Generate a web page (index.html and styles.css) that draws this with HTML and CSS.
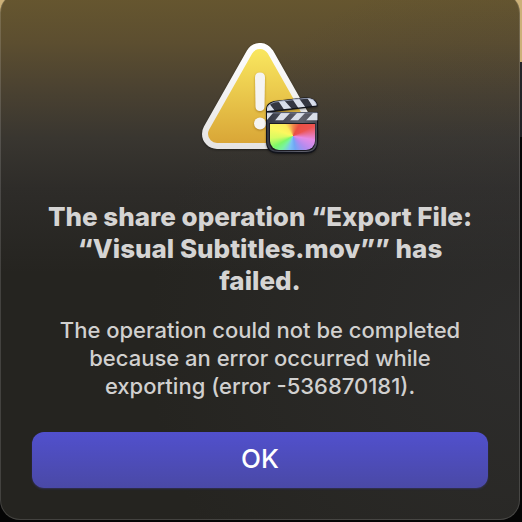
FILE: index.html
```html
<!DOCTYPE html>
<html lang="en">
<head>
    <meta charset="UTF-8">
    <title>Share failed</title>
    <link rel="stylesheet" href="styles.css">
</head>
<body>
<div class="dialog" role="alertdialog" aria-labelledby="title" aria-describedby="message">
    <svg class="icon" viewBox="0 0 128 128" aria-hidden="true">
        <defs>
            <linearGradient id="edge" gradientUnits="userSpaceOnUse" x1="0" y1="11" x2="0" y2="117">
                <stop offset="0" stop-color="#ffffff"/>
                <stop offset="1" stop-color="#e4e3e3"/>
            </linearGradient>
            <linearGradient id="yellow" gradientUnits="userSpaceOnUse" x1="0" y1="17" x2="0" y2="111">
                <stop offset="0" stop-color="#f9e75f"/>
                <stop offset="1" stop-color="#d9a637"/>
            </linearGradient>
            <linearGradient id="case" x1="0" y1="0" x2="1" y2="0">
                <stop offset="0" stop-color="#343844"/>
                <stop offset="0.7" stop-color="#60616c"/>
                <stop offset="1" stop-color="#4a4b56"/>
            </linearGradient>
            <clipPath id="arm">
                <path d="M71 79V77Q71 72 79 69.500L108 66Q118 65 120.500 72V73.500Z"/>
            </clipPath>
            <clipPath id="strip">
                <path d="M71 81H121.500V88.500H71Z"/>
            </clipPath>
        </defs>
        <!-- warning triangle -->
        <g stroke-linejoin="round">
            <path class="shadow" d="M64 26L107 102H21Z" fill="url(#edge)" stroke="url(#edge)" stroke-width="30"/>
            <path d="M64 26L107 102H21Z" fill="url(#yellow)" stroke="url(#yellow)" stroke-width="18"/>
        </g>
        <g class="mark" fill="#f5f4f2">
            <path d="M59 45.500Q59 40.500 64 40.500T69 45.500L68.500 75Q68 79 64 79T59.500 75Z"/>
            <circle cx="64" cy="91.500" r="6"/>
        </g>
        <!-- clapperboard -->
        <g class="shadow">
            <path d="M70 80V77Q70 71 78 69L108 65.500Q119 64.500 121.500 72V74.500L78 80H122V109Q122 121.500 110 121.500H82Q70 121.500 70 109Z" fill="#11131b"/>
            <path d="M71 81H121V109Q121 120 110 120H82Q71 120 71 109Z" fill="url(#case)"/>
        </g>
        <g clip-path="url(#arm)">
            <path d="M70 64H122V81H70Z" fill="#343641"/>
            <path d="M70 73L72 70L79 79L70 82ZM81 67H87L96 77L89 79ZM95 65H102L110 76L103 77ZM110 64H116L122 72V75L117 75Z" fill="#d9deea"/>
        </g>
        <path d="M72 76Q72 72 79 70L108 66.500Q118 65.500 120 72" fill="none" stroke="#a5afc8" stroke-width="0.700"/>
        <g clip-path="url(#strip)" fill="#d9dee8">
            <path d="M71 81H77L71 88ZM85 81H94L87 88.500H79ZM101 81H109L102 88.500H94ZM117 81H122V88.500H110Z"/>
        </g>
        <path d="M71 80.800H121.500" stroke="#a5afc8" stroke-width="0.700"/>
        <path d="M73 91H119.500V109Q119.500 119 109 119H83Q73 119 73 109Z" fill="#1c1b22"/>
        <foreignObject x="74" y="92" width="45" height="26">
            <div class="wheel"></div>
        </foreignObject>
    </svg>
    <h1 class="title" id="title">The share operation “Export File: “Visual Subtitles.mov”” has failed.</h1>
    <p class="message" id="message">The operation could not be completed because an error occurred while exporting (error -536870181).</p>
    <button class="ok" type="button" autofocus>OK</button>
</div>
</body>
</html>
```
FILE: styles.css
```css
*{
    box-sizing: border-box;
    padding: 0;
    margin: 0;
}
body{
    overflow: hidden;
    font-family: Inter, "Liberation Sans", sans-serif;
    background: linear-gradient(#cbb078 62px, #25262a 62px, #202124 137px, #050505 137px);
}
.dialog{
    display: flex;
    flex-direction: column;
    align-items: center;
    margin: -7px 2px 2px 0;
    padding: 39px 31px 31px;
    border: 1px solid rgba(255, 255, 255, 0.14);
    border-top: 0;
    border-radius: 20px;
    background:
        radial-gradient(circle at 100% 65%, rgba(58, 58, 62, 0.4), rgba(58, 58, 62, 0) 60%),
        linear-gradient(#67572f, #5c4e30 50px, #4b4231 95px, #393630 145px, #2e2c29 195px, #252420 280px, #252420);
    background-origin: border-box;
}
.icon{
    width: 128px;
    height: 128px;
    margin-bottom: 41px;
}
.shadow{
    filter: drop-shadow(0 1px 1px rgba(0, 0, 0, 0.4));
}
.mark{
    filter: drop-shadow(0 1px 1px rgba(140, 95, 20, 0.6));
}
.wheel{
    width: 45px;
    height: 26px;
    border-radius: 0 0 9px 9px;
    background: conic-gradient(from 0deg at 23px 12px, #f08a4c, #ea4f42 30deg, #ec5350 65deg, #e58be6 100deg, #b18cf0 135deg, #70a6f5 170deg, #7cc4f4 195deg, #79f2a4 220deg, #7df76a 240deg, #d9fb62 265deg, #fbf85f 290deg, #fdec5b 325deg, #f08a4c);
}
.title{
    padding: 0 8px;
    margin-bottom: 19px;
    font-size: 26px;
    font-weight: 800;
    line-height: 32px;
    text-align: center;
    color: #d5d4d3;
}
.message{
    padding: 0 24px;
    margin-bottom: 32px;
    font-size: 22px;
    font-weight: 500;
    line-height: 28px;
    text-align: center;
    color: #d1d0cf;
}
.ok{
    align-self: stretch;
    height: 56px;
    padding-bottom: 3px;
    border: 0;
    border-radius: 12px;
    outline: 0;
    font-family: inherit;
    font-size: 26px;
    font-weight: 500;
    color: #ffffff;
    background: linear-gradient(#5150cd, #4a49a6);
    box-shadow: 0 1px 2px rgba(60, 60, 140, 0.5);
}
```
